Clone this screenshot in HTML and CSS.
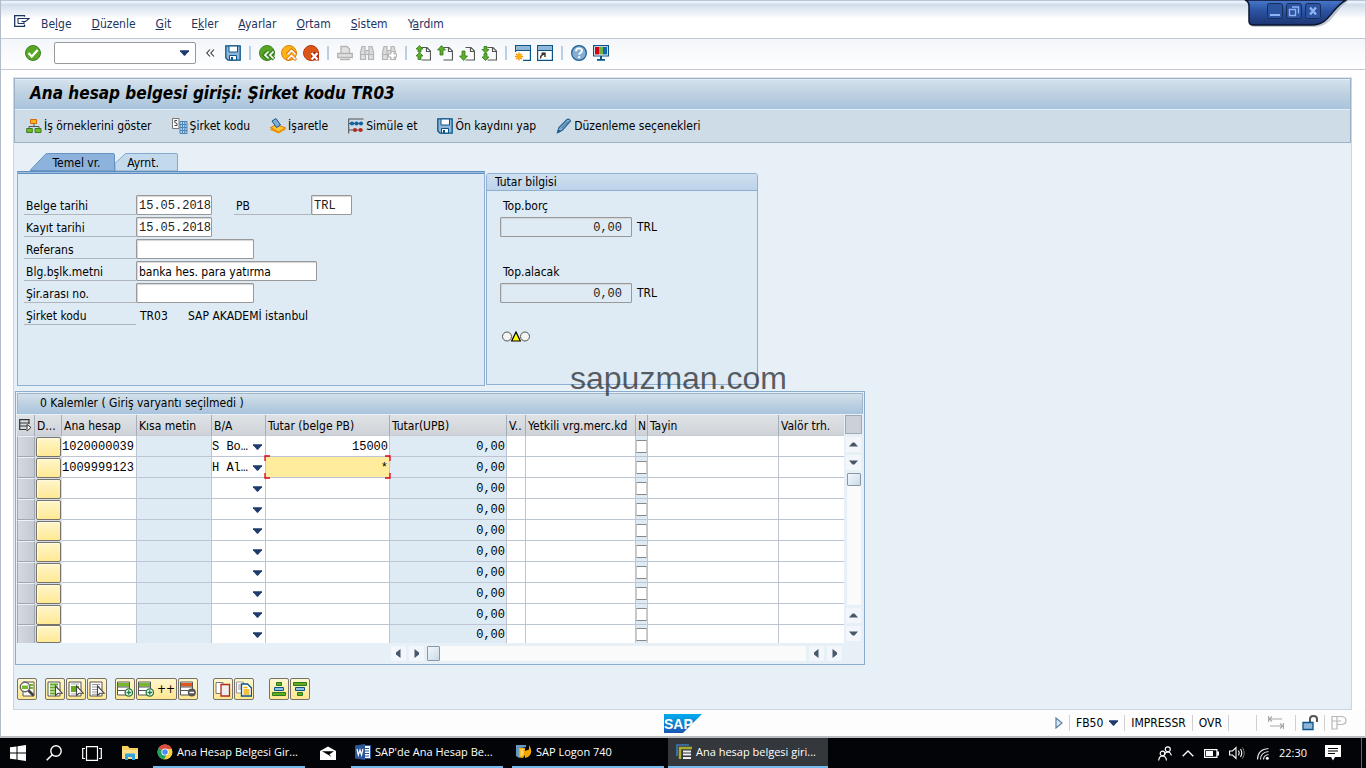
FILE: index.html
```html
<!DOCTYPE html>
<html lang="tr">
<head>
    <meta charset="UTF-8">
    <meta name="viewport" content="width=device-width, initial-scale=1.0">
    <title>Ana hesap belgesi girişi: Şirket kodu TR03</title>
    <link rel="stylesheet" href="styles.css">
</head>
<body>
<!-- shared icons -->
<svg class="sprite" aria-hidden="true">
    <symbol id="arrow-down" viewBox="0 0 10 6"><path d="M0 0h10v1L5.500 6h-1L0 1z" fill="#1f3a6e"/></symbol>
    <symbol id="save" viewBox="0 0 16 16">
        <path d="M.8.800h14.400v14.400H3L.800 13z" fill="#8fb6d9" stroke="#0a5488" stroke-width="1.300"/>
        <path d="M4 1h8.500v6H4z" fill="#fff" stroke="#0a5488"/>
        <path d="M4.500 10.500h7v4.500h-7z" fill="#fff" stroke="#0a5488"/><path d="M6 12h2v3H6z" fill="#0a5488"/>
    </symbol>
    <symbol id="page" viewBox="0 0 16 16"><path d="M6.500 2.500h5.500l3.500 3.500v9H6.500M11.500 2.500V6.500h4" fill="none" stroke="#555" stroke-width="1.200"/></symbol>
    <symbol id="page-up" viewBox="0 0 16 16"><path d="M4.500.600l4 4.400H6v5H3V5H.500z" fill="#5fae2c" stroke="#2d7a1c" stroke-width=".8"/></symbol>
    <symbol id="page-down" viewBox="0 0 16 16"><path d="M4.500 15.400l4-4.400H6V6H3v5H.500z" fill="#5fae2c" stroke="#2d7a1c" stroke-width=".8"/></symbol>
    <symbol id="binoculars" viewBox="0 0 16 16"><path d="M3 1.500h3v4h4v-4h3l1.500 6v7h-5v-5h-3v5h-5v-7zM6 5.500v4M10 5.500v4M1.500 9.500h5M9.500 9.500h5" fill="#ddd" stroke="#b4b4b4" stroke-width="1.200"/></symbol>
    <symbol id="list" viewBox="0 0 16 16"><path d="M1 1h12v14H1z" fill="#fff" stroke="#555"/></symbol>
    <symbol id="cursor" viewBox="0 0 16 16"><path d="M8.500 5v9.500l2.500-2.300h4.300z" fill="#fff" stroke="#444" stroke-width="1.100"/></symbol>
    <symbol id="row-add" viewBox="0 0 16 16">
        <path d="M.5 1h12v13H.500z" fill="#fff" stroke="#555"/><path d="M1 2h11v3.500H1z" fill="#76b82a"/><path d="M.5 6h12M.500 9.500h12" stroke="#555"/>
        <circle cx="11.800" cy="11.500" r="3.700" fill="#fff" stroke="#1f7a3a" stroke-width="1.300"/><path d="M9.500 11.500h4.600M11.800 9.200v4.600" stroke="#1f7a3a" stroke-width="1.300"/>
    </symbol>
    <symbol id="tri-up" viewBox="0 0 15 15"><path d="M3 9.500h9L8.500 5.500h-2z" fill="#46596b"/></symbol>
    <symbol id="tri-down" viewBox="0 0 15 15"><path d="M3 5.500h9L8.500 9.500h-2z" fill="#46596b"/></symbol>
    <symbol id="tri-left" viewBox="0 0 15 15"><path d="M9.500 3v9L5 8.500v-2z" fill="#46596b"/></symbol>
    <symbol id="tri-right" viewBox="0 0 15 15"><path d="M5.500 3v9L10 8.500v-2z" fill="#46596b"/></symbol>
</svg>

<div class="window">
    <nav class="menubar">
        <svg class="menu-icon" width="16" height="12" viewBox="0 0 16 12"><path d="M10.500 1.800V.700H.700v10.600h9.800V9.500" fill="none" stroke="#1d3461" stroke-width="1.300"/><path d="M4 8.500V3.500h11.200L11.500 6.500H7.500M7.500 8.500H4M8 6.500h2v2H7" fill="none" stroke="#1d3461" stroke-width="1.100"/></svg>
        <a href="#">Be<u>l</u>ge</a>
        <a href="#"><u>D</u>üzenle</a>
        <a href="#"><u>G</u>it</a>
        <a href="#">E<u>k</u>ler</a>
        <a href="#"><u>A</u>yarlar</a>
        <a href="#"><u>O</u>rtam</a>
        <a href="#"><u>S</u>istem</a>
        <a href="#">Y<u>a</u>rdım</a>
    </nav>

    <div class="window-controls">
        <svg width="110" height="30" viewBox="0 0 110 30">
            <defs><linearGradient id="wc" x1="0" y1="0" x2="0" y2="1"><stop offset="0" stop-color="#4a78c8"/><stop offset=".4" stop-color="#2d55a5"/><stop offset="1" stop-color="#1b3570"/></linearGradient></defs>
            <path d="M4 1c4 2 4 3 4 6v17q0 3 4 3h59c18 0 20-16 34-26z" fill="#8b94a5" opacity=".5"/>
            <path d="M2 0c3 1 4 3 4 6v15q0 4 4 4h59c18 0 18-16 34-25z" fill="url(#wc)" stroke="#0b1530" stroke-width="1.500"/>
            <g fill="#2c539f" stroke="#162d5e"><rect x="24.500" y="3.500" width="15" height="15" rx="2"/><rect x="43.500" y="3.500" width="15" height="15" rx="2"/><rect x="62.500" y="3.500" width="15" height="15" rx="2"/></g>
            <path d="M27 15h10" stroke="#8fb4f5" stroke-width="2"/>
            <path d="M46.500 9.500h6v6h-6zM49 7h6.500v6.500" fill="none" stroke="#8fb4f5" stroke-width="1.400"/>
            <path d="M67 7.500l6 7M73 7.500l-6 7" stroke="#8fb4f5" stroke-width="2.400"/>
        </svg>
    </div>

    <div class="toolbar">
        <button class="icon-btn" aria-label="Devam"><svg viewBox="0 0 16 16"><circle cx="8" cy="8" r="7.500" fill="#58a623" stroke="#3c8423"/><path d="M3.500 8l3.200 3.500 6-6.500" fill="none" stroke="#fff" stroke-width="2.200"/></svg></button>
        <div class="command">
            <input type="text" aria-label="Komut">
            <svg width="9" height="6"><use href="#arrow-down"/></svg>
        </div>
        <button class="chevrons" aria-label="Gizle"><svg width="9" height="8" viewBox="0 0 9 8"><path d="M4 .500L.800 4 4 7.500M8 .500L4.800 4 8 7.500" fill="none" stroke="#333" stroke-width="1.100"/></svg></button>
        <button class="icon-btn" aria-label="Kaydet"><svg><use href="#save"/></svg></button>
        <span class="sep"></span>
        <button class="icon-btn" aria-label="Geri"><svg viewBox="0 0 16 16"><circle cx="8" cy="8" r="7.500" fill="#58a623" stroke="#3c8423"/><path d="M9.500 6L5.500 10l4 4M15 6l-4 4 4 4" fill="none" stroke="#3c8423" stroke-width="4"/><path d="M9.500 6.500L6 10l3.500 3.500M14.500 6.500L11 10l3.500 3.500" fill="none" stroke="#fff" stroke-width="1.700"/></svg></button>
        <button class="icon-btn" aria-label="Son"><svg viewBox="0 0 16 16"><circle cx="8" cy="8" r="7.500" fill="#fbb216" stroke="#d8860b"/><path d="M6 9.500l4.500-4.500L15 9.500M6 15l4.500-4.500L15 15" fill="none" stroke="#d9690b" stroke-width="3"/><path d="M6.500 9.500l4-4 4 4M6.500 14.500l4-4 4 4" fill="none" stroke="#fff" stroke-width="1.700"/></svg></button>
        <button class="icon-btn" aria-label="İptal"><svg viewBox="0 0 16 16"><circle cx="8" cy="8" r="7.500" fill="#dc5617" stroke="#b53c12"/><path d="M8 7h8v8.500H8z" fill="#b92c10"/><path d="M8.500 8l6 6.500M14.500 8l-6 6.500" stroke="#fff" stroke-width="2.200"/></svg></button>
        <span class="sep"></span>
        <button class="icon-btn" aria-label="Yazdır" disabled><svg viewBox="0 0 16 16"><path d="M4 8V1.500h6L12.500 4v4M.700 8.500h14.600v4H.700zM3 14.500h10" fill="#e2e2e2" stroke="#b4b4b4" stroke-width="1.300"/></svg></button>
        <button class="icon-btn" aria-label="Bul" disabled><svg><use href="#binoculars"/></svg></button>
        <button class="icon-btn" aria-label="Sonrakini bul" disabled><svg viewBox="0 0 16 16"><use href="#binoculars"/><path d="M10 6.500h3v2.500h2.500v3H13v2.500h-3V12H7.500V9H10z" fill="#fff" stroke="#b4b4b4"/></svg></button>
        <span class="sep"></span>
        <button class="icon-btn" aria-label="İlk sayfa"><svg viewBox="0 0 16 16"><use href="#page"/><path d="M4.500.500L8 4H6v3H3V4H1zM4.500 7.500L8 11H6v3.500H3V11H1z" fill="#5fae2c" stroke="#2d7a1c" stroke-width=".8"/></svg></button>
        <button class="icon-btn" aria-label="Önceki sayfa"><svg viewBox="0 0 16 16"><use href="#page"/><use href="#page-up"/></svg></button>
        <button class="icon-btn" aria-label="Sonraki sayfa"><svg viewBox="0 0 16 16"><use href="#page"/><use href="#page-down"/></svg></button>
        <button class="icon-btn" aria-label="Son sayfa"><svg viewBox="0 0 16 16"><use href="#page"/><path d="M4.500 8L8 4.500H6V1.500H3v3H1zM4.500 15.500L8 12H6V8.500H3V12H1z" fill="#5fae2c" stroke="#2d7a1c" stroke-width=".8"/></svg></button>
        <span class="sep"></span>
        <button class="icon-btn" aria-label="Yeni oturum"><svg viewBox="0 0 16 16"><path d="M.6.600h14.800v14.800H.600z" fill="#fff" stroke="#0a5488" stroke-width="1.200"/><path d="M1.200 1.200h13.600v4H1.200z" fill="#8fb6d9"/><path d="M1 5.500h14" stroke="#0a5488"/><path d="M0 7h8v9H0z" fill="#fff"/><path d="M4 7.500v8M0 11.500h8M1.200 8.700l5.600 5.600M6.800 8.700l-5.600 5.600" stroke="#f39200" stroke-width="1.300"/><circle cx="4" cy="11.500" r="2.300" fill="#ffb000"/></svg></button>
        <button class="icon-btn" aria-label="Kısayol"><svg viewBox="0 0 16 16"><path d="M.6.600h14.800v14.800H.600z" fill="#fff" stroke="#0a5488" stroke-width="1.200"/><path d="M1.200 1.200h13.600v4H1.200z" fill="#8fb6d9"/><path d="M1 5.500h14" stroke="#0a5488"/><path d="M3.500 13.500c0-2.500 1-4 4-4.500M4.500 8.200H8V12" fill="none" stroke="#333" stroke-width="1.400"/></svg></button>
        <span class="sep"></span>
        <button class="icon-btn" aria-label="Yardım"><svg viewBox="0 0 16 16"><circle cx="8" cy="8" r="7.400" fill="#84add3" stroke="#1f5f92" stroke-width="1.200"/><path d="M5 6.200c0-3.800 6-3.600 6-.4 0 2-2.800 2-2.800 4" fill="none" stroke="#fff" stroke-width="1.900"/><path d="M7.200 11.200h2v2h-2z" fill="#fff"/></svg></button>
        <button class="icon-btn" aria-label="Yerel düzen"><svg viewBox="0 0 16 16"><path d="M.6.600h14.800v10.400H.600z" fill="#fff" stroke="#0a5488" stroke-width="1.200"/><path d="M2 2h4v7.500H2z" fill="#d4001a"/><path d="M6 2h4v7.500H6z" fill="#6cb33f"/><path d="M10 2h4v7.500h-4z" fill="#1568b0"/><path d="M7 11h2v3H7zM4 14h8v1.800H4z" fill="#0a5488"/></svg></button>
    </div>

    <main class="screen">
        <div class="screen-head">
            <h1>Ana hesap belgesi girişi: Şirket kodu TR03</h1>
            <div class="app-toolbar">
                <button><svg viewBox="0 0 16 16"><path d="M8 6v3M3 11V8.500h10V11" fill="none" stroke="#555"/><path d="M4.500 1.500h6v4h-6z" fill="#fdb813" stroke="#d8690b"/><path d="M.7 10.500h5.600v4H.700zM9 10.500h6v4H9z" fill="#76b82a" stroke="#3b7d23"/></svg>İş örneklerini göster</button>
                <button><svg viewBox="0 0 16 16"><path d="M.5.500h6.500v10H.500z" fill="#fff" stroke="#777"/><path d="M5 2.500H2.800v2l2.200 1v2H2.500" fill="none" stroke="#444"/><path d="M8 3.500h7v12H8z" fill="#b7d1ea" stroke="#4b83b5"/><path d="M8 6.500h7M8 9.500h7M8 12.500h7M10.500 4v11M12.800 4v11" stroke="#4b83b5"/></svg>Şirket kodu</button>
                <button><svg viewBox="0 0 16 16"><path d="M.5 9.500l6-3 9 3.500-7 4z" fill="#fdc52f" stroke="#d8790b"/><path d="M.5 10v2l8 3.500 7-4V10l-7 4z" fill="#f39200"/><path d="M2 3l4-2.500 4.500 6.500-4 2.500z" fill="#7eaedb" stroke="#23557f"/></svg>İşaretle</button>
                <button><svg viewBox="0 0 16 16"><path d="M.7 15.500V1h14.800M.700 5.500H15M.700 12H15" fill="none" stroke="#555" stroke-width="1.100"/><g fill="#0f64a0"><circle cx="4" cy="5.500" r="2.100"/><circle cx="8.500" cy="5.500" r="2.100"/><circle cx="13" cy="5.500" r="2.100"/></g><g fill="#b52a1c"><circle cx="7" cy="12" r="2.100"/><circle cx="12.500" cy="12" r="2.100"/></g></svg>Simüle et</button>
                <button><svg><use href="#save"/></svg>Ön kaydını yap</button>
                <button><svg viewBox="0 0 16 16"><path d="M1.500 14.500l1.500-5L11 1.500q2-1 3.500 1.500L6.500 12z" fill="#8fb6d9" stroke="#23608f" stroke-width="1.200"/><path d="M1.500 14.500l1-3 2 2zM5 10.500l7-7" fill="#23608f" stroke="#23608f"/></svg>Düzenleme seçenekleri</button>
            </div>
        </div>

        <div class="content">
            <div class="panels">
                <section class="tab-box">
                    <div class="tabs">
                        <button class="tab tab-active"><svg viewBox="0 0 86 19" preserveAspectRatio="none"><path d="M0 18.500L15 2q1-1.500 3-1.500h66q1.500 0 1.500 1.500v17z" fill="#8db2dc" stroke="#5f8fbf"/></svg><span>Temel vr.</span></button>
                        <button class="tab"><svg viewBox="0 0 63 19" preserveAspectRatio="none"><path d="M0 19v-8L9 2q1-1.500 3-1.500h49q1.500 0 1.500 1.500v17z" fill="#c3d9ec" stroke="#7fa6cc"/></svg><span>Ayrnt.</span></button>
                    </div>
                    <div class="tab-page">
                        <div class="row">
                            <label for="f-date">Belge tarihi</label><input id="f-date" class="mono w-date" type="text" value="15.05.2018">
                            <label for="f-cur" class="label-short">PB</label><input id="f-cur" class="mono w-cur" type="text" value="TRL">
                        </div>
                        <div class="row"><label for="f-post">Kayıt tarihi</label><input id="f-post" class="mono w-date" type="text" value="15.05.2018"></div>
                        <div class="row"><label for="f-ref">Referans</label><input id="f-ref" class="w-ref" type="text"></div>
                        <div class="row"><label for="f-text">Blg.bşlk.metni</label><input id="f-text" class="w-text" type="text" value="banka hes. para yatırma"></div>
                        <div class="row"><label for="f-ic">Şir.arası no.</label><input id="f-ic" class="w-ref" type="text"></div>
                        <div class="row"><span class="label">Şirket kodu</span><span class="company-code">TR03</span><span>SAP AKADEMİ istanbul</span></div>
                    </div>
                </section>

                <section class="amount-box">
                    <h2>Tutar bilgisi</h2>
                    <div class="amount-body">
                        <label for="a-debit">Top.borç</label>
                        <div class="amount"><input id="a-debit" class="mono" type="text" value="0,00" readonly>TRL</div>
                        <label for="a-credit">Top.alacak</label>
                        <div class="amount"><input id="a-credit" class="mono" type="text" value="0,00" readonly>TRL</div>
                        <svg class="lights" width="28" height="11" viewBox="0 0 28 11"><circle cx="5" cy="5.500" r="4.500" fill="#f4f4f0" stroke="#555"/><circle cx="23" cy="5.500" r="4.500" fill="#f4f4f0" stroke="#555"/><path d="M14 1l4.300 9H9.700z" fill="#ff0" stroke="#000" stroke-width="1.200"/></svg>
                    </div>
                </section>
                <div class="watermark">sapuzman.com</div>
            </div>

            <section class="items">
                <h2>0 Kalemler ( Giriş varyantı seçilmedi )</h2>
                <div class="grid">
                    <table>
                        <colgroup><col class="c-sel"><col class="c-st"><col class="c-acc"><col class="c-acc"><col class="c-dc"><col class="c-amt"><col class="c-loc"><col class="c-v"><col class="c-jur"><col class="c-n"><col class="c-asg"><col class="c-val"></colgroup>
                        <thead>
                            <tr><th><svg width="13" height="13" viewBox="0 0 13 13"><path d="M10 5V.700H.700v9.800H7M.700 4H10M.700 7H8" fill="none" stroke="#333" stroke-width="1.200"/><path d="M8 5.500v6.500l4-3.500z" fill="#fff" stroke="#333"/></svg></th><th>D...</th><th>Ana hesap</th><th>Kısa metin</th><th>B/A</th><th>Tutar (belge PB)</th><th>Tutar(UPB)</th><th>V..</th><th>Yetkili vrg.merc.kd</th><th>N</th><th>Tayin</th><th>Valör trh.</th></tr>
                        </thead>
                        <tbody>
                            <tr><td></td><td><button aria-label="Durum"></button></td><td><input type="text" aria-label="Ana hesap" value="1020000039"></td><td></td><td><div class="dc"><select aria-label="B/A"><option>S Bo…</option></select><svg><use href="#arrow-down"/></svg></div></td><td><input type="text" class="num" aria-label="Tutar" value="15000"></td><td>0,00</td><td></td><td></td><td><input type="checkbox" aria-label="N"></td><td></td><td></td></tr>
                            <tr><td></td><td><button aria-label="Durum"></button></td><td><input type="text" aria-label="Ana hesap" value="1009999123"></td><td></td><td><div class="dc"><select aria-label="B/A"><option>H Al…</option></select><svg><use href="#arrow-down"/></svg></div></td><td class="current"><input type="text" class="num" aria-label="Tutar" value="*"><svg class="focus" viewBox="0 0 127 24"><path d="M1 6V1h5M121 1h5v5M126 18v5h-5M6 23H1v-5" fill="none" stroke="#e2000f" stroke-width="1.300"/></svg></td><td>0,00</td><td></td><td></td><td><input type="checkbox" aria-label="N"></td><td></td><td></td></tr>
                            <tr><td></td><td><button aria-label="Durum"></button></td><td><input type="text" aria-label="Ana hesap"></td><td></td><td><div class="dc"><select aria-label="B/A"><option></option></select><svg><use href="#arrow-down"/></svg></div></td><td><input type="text" class="num" aria-label="Tutar"></td><td>0,00</td><td></td><td></td><td><input type="checkbox" aria-label="N"></td><td></td><td></td></tr>
                            <tr><td></td><td><button aria-label="Durum"></button></td><td><input type="text" aria-label="Ana hesap"></td><td></td><td><div class="dc"><select aria-label="B/A"><option></option></select><svg><use href="#arrow-down"/></svg></div></td><td><input type="text" class="num" aria-label="Tutar"></td><td>0,00</td><td></td><td></td><td><input type="checkbox" aria-label="N"></td><td></td><td></td></tr>
                            <tr><td></td><td><button aria-label="Durum"></button></td><td><input type="text" aria-label="Ana hesap"></td><td></td><td><div class="dc"><select aria-label="B/A"><option></option></select><svg><use href="#arrow-down"/></svg></div></td><td><input type="text" class="num" aria-label="Tutar"></td><td>0,00</td><td></td><td></td><td><input type="checkbox" aria-label="N"></td><td></td><td></td></tr>
                            <tr><td></td><td><button aria-label="Durum"></button></td><td><input type="text" aria-label="Ana hesap"></td><td></td><td><div class="dc"><select aria-label="B/A"><option></option></select><svg><use href="#arrow-down"/></svg></div></td><td><input type="text" class="num" aria-label="Tutar"></td><td>0,00</td><td></td><td></td><td><input type="checkbox" aria-label="N"></td><td></td><td></td></tr>
                            <tr><td></td><td><button aria-label="Durum"></button></td><td><input type="text" aria-label="Ana hesap"></td><td></td><td><div class="dc"><select aria-label="B/A"><option></option></select><svg><use href="#arrow-down"/></svg></div></td><td><input type="text" class="num" aria-label="Tutar"></td><td>0,00</td><td></td><td></td><td><input type="checkbox" aria-label="N"></td><td></td><td></td></tr>
                            <tr><td></td><td><button aria-label="Durum"></button></td><td><input type="text" aria-label="Ana hesap"></td><td></td><td><div class="dc"><select aria-label="B/A"><option></option></select><svg><use href="#arrow-down"/></svg></div></td><td><input type="text" class="num" aria-label="Tutar"></td><td>0,00</td><td></td><td></td><td><input type="checkbox" aria-label="N"></td><td></td><td></td></tr>
                            <tr><td></td><td><button aria-label="Durum"></button></td><td><input type="text" aria-label="Ana hesap"></td><td></td><td><div class="dc"><select aria-label="B/A"><option></option></select><svg><use href="#arrow-down"/></svg></div></td><td><input type="text" class="num" aria-label="Tutar"></td><td>0,00</td><td></td><td></td><td><input type="checkbox" aria-label="N"></td><td></td><td></td></tr>
                            <tr><td></td><td><button aria-label="Durum"></button></td><td><input type="text" aria-label="Ana hesap"></td><td></td><td><div class="dc"><select aria-label="B/A"><option></option></select><svg><use href="#arrow-down"/></svg></div></td><td><input type="text" class="num" aria-label="Tutar"></td><td>0,00</td><td></td><td></td><td><input type="checkbox" aria-label="N"></td><td></td><td></td></tr>
                        </tbody>
                    </table>
                    <div class="vscroll">
                        <button class="corner" aria-label="Tablo ayarları"></button>
                        <button class="step" aria-label="Yukarı"><svg><use href="#tri-up"/></svg></button>
                        <button class="step" aria-label="Aşağı"><svg><use href="#tri-down"/></svg></button>
                        <div class="track"><div class="thumb"></div></div>
                        <button class="step" aria-label="Yukarı"><svg><use href="#tri-up"/></svg></button>
                        <button class="step" aria-label="Aşağı"><svg><use href="#tri-down"/></svg></button>
                    </div>
                </div>
                <div class="hscroll">
                    <button class="step" aria-label="Sola"><svg><use href="#tri-left"/></svg></button>
                    <button class="step" aria-label="Sağa"><svg><use href="#tri-right"/></svg></button>
                    <div class="track"><div class="thumb"></div></div>
                    <button class="step" aria-label="Sola"><svg><use href="#tri-left"/></svg></button>
                    <button class="step" aria-label="Sağa"><svg><use href="#tri-right"/></svg></button>
                </div>
            </section>

            <div class="actions">
                <div class="group">
                    <button aria-label="Ayrıntı"><svg viewBox="0 0 16 16"><path d="M4 1h11v14H4z" fill="#fff" stroke="#555"/><path d="M11 3h3v2h-3zM11 6h3v2h-3z" fill="#76b82a"/><circle cx="6" cy="6" r="4.700" fill="#fff" stroke="#666" stroke-width="1.500"/><path d="M3 4.500h6v3.500H3z" fill="#76b82a"/><path d="M9.500 9.500l5 5" stroke="#444" stroke-width="2.800"/></svg></button>
                </div>
                <div class="group">
                    <button aria-label="Tümünü seç"><svg viewBox="0 0 16 16"><use href="#list"/><path d="M3 3.500h8M3 6.500h8M3 9.500h8M3 12.500h8" stroke="#62ab20" stroke-width="2.200"/><use href="#cursor"/></svg></button>
                    <button aria-label="Blok seç"><svg viewBox="0 0 16 16"><use href="#list"/><path d="M3 3h8M3 13h8" stroke="#aaa"/><path d="M3 5h8v6H3z" fill="#62ab20"/><use href="#cursor"/></svg></button>
                    <button aria-label="Seçimi kaldır"><svg viewBox="0 0 16 16"><use href="#list"/><path d="M3 3.500h8M3 6h8M3 8.500h8M3 11h8M3 13.300h8" stroke="#999"/><use href="#cursor"/></svg></button>
                </div>
                <div class="group">
                    <button aria-label="Satır ekle"><svg><use href="#row-add"/></svg></button>
                    <button class="wide"><svg><use href="#row-add"/></svg>++</button>
                    <button aria-label="Satır sil"><svg viewBox="0 0 16 16"><path d="M.5 1h12v13H.500z" fill="#fff" stroke="#555"/><path d="M1 2h11v3.500H1z" fill="#e0561b"/><path d="M.5 6h12M.500 9.500h12" stroke="#555"/><circle cx="11.800" cy="11.500" r="4" fill="#555"/><path d="M9.500 11.500h4.600" stroke="#fff" stroke-width="1.500"/></svg></button>
                </div>
                <div class="group group-gap">
                    <button aria-label="Sil"><svg viewBox="0 0 16 16"><path d="M1 1.500h7v11H1z" fill="#fff" stroke="#777"/><path d="M6 3.500h8.500v11.500H6z" fill="#eee" stroke="#b52a1c" stroke-width="1.300"/></svg></button>
                    <button aria-label="Kopyala"><svg viewBox="0 0 16 16"><path d="M.5 1h7v11h-7z" fill="#fff" stroke="#999"/><path d="M2 4h4M2 6h4M2 8h4" stroke="#999"/><path d="M5.500 3h6l4 4v8h-10z" fill="#fff" stroke="#0a5488" stroke-width="1.300"/><path d="M7.500 6.500h4M7.500 9h6M7.500 11h6M7.500 13h6" stroke="#f0ac00" stroke-width="1.300"/></svg></button>
                </div>
                <div class="group group-gap">
                    <button aria-label="Artan sırala"><svg viewBox="0 0 16 16"><path d="M5.500 1.500h5v3h-5z" fill="#62ab20" stroke="#2d7a1c"/><path d="M3.500 6.500h9v3h-9z" fill="#8fc1ea" stroke="#0a5488"/><path d="M1.500 11.500h13v3h-13z" fill="#62ab20" stroke="#2d7a1c"/></svg></button>
                    <button aria-label="Azalan sırala"><svg viewBox="0 0 16 16"><path d="M1.500 1.500h13v3h-13z" fill="#62ab20" stroke="#2d7a1c"/><path d="M3.500 6.500h9v3h-9z" fill="#8fc1ea" stroke="#0a5488"/><path d="M5.500 11.500h5v3h-5z" fill="#62ab20" stroke="#2d7a1c"/></svg></button>
                </div>
            </div>
        </div>
    </main>

    <footer class="statusbar">
        <div></div>
        <svg width="38" height="19" viewBox="0 0 38 19">
            <defs><linearGradient id="sap" x1="0" y1="0" x2="0" y2="1"><stop offset="0" stop-color="#00aeef"/><stop offset="1" stop-color="#1b55b5"/></linearGradient></defs>
            <path d="M0 0h38L19 19H0z" fill="url(#sap)"/><text x="0" y="15" class="sap-text">SAP</text>
        </svg>
        <div class="status-info">
            <svg width="8" height="12" viewBox="0 0 8 12"><path d="M1 1v10l6-5z" fill="#dbe8f3" stroke="#5d7ea3" stroke-width="1.200"/></svg>
            <span class="st">FB50 <svg width="9" height="6"><use href="#arrow-down"/></svg></span>
            <span class="st">IMPRESSR</span>
            <span class="st">OVR</span>
            <span class="st st-empty"></span>
            <span class="st st-icon st-wide"><svg viewBox="0 0 16 16"><path d="M.6 1v6M1 4h13M4 1.500L1.500 4 4 6.500M15.400 8v6M15 11H2M12 8.500l2.500 2.500-2.500 2.500" fill="none" stroke="#a8a8a8" stroke-width="1.200"/></svg></span>
            <span class="st st-icon"><svg viewBox="0 0 16 16"><path d="M8 7V4q0-3 3.500-3T15 4v3" fill="none" stroke="#555" stroke-width="2"/><path d="M1 7.500h10v7H1z" fill="#8fb6d9" stroke="#0a5488" stroke-width="1.300"/></svg></span>
            <span class="st st-icon"><svg viewBox="0 0 16 16"><path d="M1 1.500h9q5 0 5 4t-5 4H6v4.500H1zM1 6h5V2M6 9.500V6h4" fill="none" stroke="#b8b8b8" stroke-width="1.200"/></svg></span>
        </div>
    </footer>
</div>

<div class="taskbar">
    <div class="task-icons">
        <svg width="16" height="16" viewBox="0 0 16 16"><path d="M0 2.300L6.500 1.400v6.100H0zM7.500 1.200L16 0v7.500H7.500zM0 8.500h6.500v6.100L0 13.700zM7.500 8.500H16V16l-8.500-1.200z" fill="#fff"/></svg>
        <svg width="16" height="16" viewBox="0 0 16 16"><circle cx="10" cy="6" r="5.200" fill="none" stroke="#fff" stroke-width="1.400"/><path d="M6.500 9.500L.700 15.300" stroke="#fff" stroke-width="1.600"/></svg>
        <svg width="20" height="15" viewBox="0 0 20 15"><path d="M4.500.700h11v13.600h-11zM3 2.500H.700v10H3M17 2.500h2.300v10H17" fill="none" stroke="#fff" stroke-width="1.200"/></svg>
        <svg width="16" height="16" viewBox="0 0 16 16"><path d="M0 1h6l1.500 2H16v11H0z" fill="#f5cf60"/><path d="M0 5h16v9H0z" fill="#ffe08a"/><path d="M3 15V8.500h10V15h-3v-3H6v3z" fill="#35a3e0"/></svg>
    </div>
    <button class="task"><svg viewBox="0 0 16 16"><circle cx="8" cy="8" r="7.500" fill="#ffcd40"/><path d="M8 8L1.500 4.200A7.500 7.500 0 0 1 14.800 5H8z" fill="#dd4b3e"/><path d="M8 8L1.500 4.200A7.500 7.500 0 0 0 7 15.400L10.500 9z" fill="#1da262"/><circle cx="8" cy="8" r="3.600" fill="#fff"/><circle cx="8" cy="8" r="2.800" fill="#4c8bf5"/></svg>Ana Hesap Belgesi Gir...</button>
    <svg class="mail" width="16" height="14" viewBox="0 0 16 14"><path d="M0 5l8-4.500L16 5v9H0z" fill="#fff"/><path d="M2 5.300h12L8.500 9z" fill="#000"/><path d="M8.500 7l3 4-3-2z" fill="#000"/></svg>
    <button class="task"><svg viewBox="0 0 16 16"><path d="M9 1.500h6.500v13H9z" fill="#fff" stroke="#2b579a"/><path d="M10 4.500h4M10 7h4M10 9.500h4M10 12h4" stroke="#2b579a"/><path d="M0 1.500L10 0v16L0 14.500z" fill="#2b579a"/><path d="M2 5l1.300 6L5 6l1.500 5L8 5" fill="none" stroke="#fff" stroke-width="1.200"/></svg>SAP'de Ana Hesap Be...</button>
    <button class="task"><svg viewBox="0 0 16 16"><path d="M0 1h10v2L3 4.500V14L0 12z" fill="#6a96bd"/><path d="M3 4h6v3l4-1.500V1q4 6 1 10-2 3-5 3v-3l-2 3-4-.5z" fill="#f7a800"/><path d="M4.500 5h3v6l-3 2z" fill="#ffd75a"/></svg>SAP Logon 740</button>
    <button class="task task-active"><svg viewBox="0 0 16 16"><path d="M1 12V1h12" fill="none" stroke="#3c7bb8" stroke-width="1.700"/><path d="M4 15V4h12" fill="none" stroke="#a9ab2c" stroke-width="2.500"/><path d="M7 7.500h8M7 10.500h8M7 14h8" stroke="#eee" stroke-width="2.200"/></svg>Ana hesap belgesi giri...</button>
    <div class="tray">
        <svg width="14" height="15" viewBox="0 0 14 15"><g fill="none" stroke="#fff" stroke-width="1.200"><circle cx="9.800" cy="3.300" r="2.500"/><path d="M6.500 9q.500-3 3.300-3t3.500 3.500"/><circle cx="4.500" cy="7.500" r="2.300"/><path d="M.7 14.500q.300-4.500 3.800-4.500t4 4.500"/></g></svg>
        <svg width="12" height="7" viewBox="0 0 12 7"><path d="M.7 6.300L6 1l5.300 5.300" fill="none" stroke="#fff" stroke-width="1.300"/></svg>
        <svg width="15" height="9" viewBox="0 0 15 9"><path d="M.6.600h12.300v7.800H.600z" fill="none" stroke="#fff" stroke-width="1.200"/><path d="M2 2h7v5H2zM13 2.500h2v4h-2z" fill="#fff"/></svg>
        <svg width="17" height="14" viewBox="0 0 17 14"><path d="M.6 5h2.900L7 1.500v11L3.500 9H.600zM9.500 4.500q1.500 2.500 0 5M11.500 3q2.500 4 0 8" fill="none" stroke="#fff" stroke-width="1.100"/><path d="M13.500 1.500q3.500 5.500 0 11" fill="none" stroke="#777"/></svg>
        <svg width="13" height="13" viewBox="0 0 13 13"><path d="M1.500 12.500q0-10 11-11M4.500 12.500q0-7 8-8M7.500 12.500q0-4 5-5" fill="none" stroke="#ddd" stroke-width="1.200"/><circle cx="11.300" cy="11.300" r="1.500" fill="#fff"/></svg>
        <span>22:30</span>
        <svg class="notice" width="16" height="16" viewBox="0 0 16 16"><path d="M0 0h16v12H10l-2 3.500L6 12H0z" fill="#fff"/><path d="M3 3.500h10M3 6h10M3 8.500h7" stroke="#000"/></svg>
    </div>
</div>
</body>
</html>
```

FILE: styles.css
```css
* {
    box-sizing: border-box;
}
body {
    margin: 0;
    min-height: 100vh;
    display: flex;
    flex-direction: column;
    font-family: "DejaVu Sans Condensed", Tahoma, sans-serif;
    font-size: 12px;
    line-height: 16px;
    color: #000;
    background: #fff;
}
button, input, select {
    font: inherit;
    color: inherit;
    margin: 0;
    padding: 0;
    border: none;
    border-radius: 0;
    background: none;
    outline: none;
    appearance: none;
}
svg {
    display: block;
    flex: none;
}
h1, h2 {
    margin: 0;
}
.sprite {
    position: absolute;
    width: 0;
    height: 0;
}
.window {
    flex: 1;
    display: flex;
    flex-direction: column;
    position: relative;
    border-left: 1px solid #b3bccb;
    border-right: 1px solid #c9cfd8;
    border-bottom: 2px solid #b9bcc1;
}

/* menu and system toolbar */
.menubar {
    display: flex;
    align-items: center;
    gap: 20px;
    height: 39px;
    padding: 8px 13px 0;
    border-top: 1px solid #b9c6da;
    border-bottom: 1px solid #c3cad6;
    background: linear-gradient(#e9f1fb 0, #e9f1fb 2px, #d0dcea 3px, #fff 18px);
}
.menubar a {
    color: #1d3461;
    text-decoration: none;
}
.menu-icon {
    margin: 0 -9px 6px 0;
}
.window-controls {
    position: absolute;
    top: 0;
    right: 12px;
}
.toolbar {
    display: flex;
    align-items: center;
    gap: 6px;
    height: 31px;
    padding: 0 24px 2px;
    border-bottom: 1px solid #c3cad6;
    background: linear-gradient(#f3f6fa, #fff);
}
.icon-btn, .icon-btn svg {
    width: 16px;
    height: 16px;
}
.sep {
    width: 2px;
    height: 14px;
    margin: 0 2px;
    background: #b9d0e6;
}
.command {
    display: flex;
    align-items: center;
    width: 142px;
    height: 22px;
    margin-left: 7px;
    padding-right: 6px;
    border: 1px solid #999;
    border-radius: 2px;
    background: #fff;
}
.command input {
    flex: 1;
    min-width: 0;
}
.chevrons {
    margin: 0 4px;
}

/* transaction screen */
.screen {
    flex: 1;
    display: flex;
    flex-direction: column;
    margin: 7px 13px 0 12px;
    border: 1px solid #ccd6e2;
    border-top: 1px solid #dfe6ee;
    background: #e8f0f7;
}
.screen-head {
    border: 1px solid #9db2c6;
    background: #cedce7;
}
.screen-head h1 {
    height: 31px;
    padding-left: 15px;
    border-top: 1px solid #e4eef6;
    border-bottom: 1px solid #e4eef6;
    font-size: 17px;
    line-height: 26px;
    font-style: italic;
    background: linear-gradient(#d3e1ec, #bdd0e0 50%, #a9c4de);
}
.app-toolbar {
    display: flex;
    align-items: center;
    gap: 20px;
    height: 32px;
    padding: 0 0 1px 11px;
}
.app-toolbar button {
    display: flex;
    align-items: center;
    gap: 2px;
}
.app-toolbar svg {
    width: 16px;
    height: 16px;
}
.content {
    flex: 1;
    padding: 10px 1px 0;
}
.panels {
    position: relative;
    display: flex;
    align-items: stretch;
    gap: 1px;
    padding-left: 2px;
}
.tabs {
    display: flex;
    height: 18px;
    padding-left: 13px;
}
.tab {
    position: relative;
    width: 63px;
    padding: 1px 7px 0 0;
}
.tab-active {
    width: 85px;
    padding: 1px 0 0 8px;
}
.tab svg {
    position: absolute;
    top: 0;
    left: 0;
    width: 100%;
    height: 100%;
}
.tab span {
    position: relative;
}
.tab-page {
    width: 468px;
    height: 215px;
    padding: 23px 6px 0;
    border: 1px solid #8fb0d2;
    border-top-color: #5f8fbf;
    background: #deebf5;
    box-shadow: inset 0 1px #9dbce0, inset 0 2px #5f8fbf;
}
.row {
    display: flex;
    height: 22px;
}
.row label, .label {
    width: 112px;
    height: 20px;
    padding-left: 2px;
    border-bottom: 1px solid #b0b6bc;
}
.row label, .row span {
    line-height: 22px;
}
.row .label-short {
    width: 77px;
    margin-left: 22px;
}
.row input, .amount input {
    height: 20px;
    padding: 1px 2px 0;
    border: 1px solid #999;
    border-radius: 1px;
    background: #fff;
    box-shadow: inset 1px 1px 1px #d5d5d5;
}
.row .w-date {
    width: 76px;
    padding: 1px 0 0 2px;
}
.row .w-cur {
    width: 41px;
}
.row .w-ref {
    width: 118px;
}
.row .w-text {
    width: 181px;
}
.company-code {
    width: 52px;
    padding-left: 4px;
}
.mono {
    font-family: "Liberation Mono", "Courier New", monospace;
    color: #222;
}
.amount-box {
    width: 272px;
    margin: 20px 0 1px;
    border: 1px solid #8fb0d2;
    border-radius: 3px 3px 0 0;
    background: #deebf4;
}
.amount-box h2 {
    height: 17px;
    padding-left: 8px;
    border-bottom: 1px solid #8fb0d2;
    border-radius: 2px 2px 0 0;
    font-size: 12px;
    font-weight: normal;
    background: linear-gradient(#cfe0ef, #bcd3e9);
}
.amount-body {
    display: flex;
    flex-direction: column;
    padding: 4px 13px;
}
.amount-body label {
    height: 22px;
    padding-left: 3px;
    line-height: 22px;
}
.amount {
    display: flex;
    align-items: center;
    gap: 5px;
    height: 20px;
    margin-bottom: 24px;
}
.amount input {
    width: 132px;
    padding-right: 9px;
    text-align: right;
    background: #deebf5;
}
.lights {
    margin: 4px 0 0 2px;
}
.watermark {
    position: absolute;
    left: 555px;
    bottom: -12px;
    font-family: "Liberation Sans", Arial, sans-serif;
    font-size: 32px;
    line-height: 40px;
    color: rgba(40, 44, 48, 0.75);
}

/* line items */
.items {
    width: 850px;
    height: 274px;
    margin-top: 5px;
    padding: 1px;
    border: 1px solid #8aaccd;
}
.items h2 {
    height: 21px;
    padding-left: 22px;
    border: 1px solid #9fb5ca;
    border-bottom: none;
    font-size: 12px;
    line-height: 18px;
    font-weight: normal;
    background: linear-gradient(#d3e1ec, #bdd0e0 50%, #a9c4de);
}
.grid {
    display: flex;
    gap: 1px;
}
table {
    width: 827px;
    margin-top: 1px;
    table-layout: fixed;
    border-collapse: separate;
    border-spacing: 0;
}
.c-sel { width: 18px; }
.c-st { width: 27px; }
.c-acc { width: 75px; }
.c-dc { width: 54px; }
.c-amt { width: 124px; }
.c-loc { width: 117px; }
.c-v { width: 19px; }
.c-jur { width: 110px; }
.c-n { width: 12px; }
.c-asg { width: 131px; }
.c-val { width: 65px; }
th {
    height: 21px;
    padding: 1px 0 0 2px;
    border-right: 1px solid #a4adb8;
    border-bottom: 1px solid #c3ccd6;
    font-weight: normal;
    text-align: left;
    white-space: nowrap;
    overflow: hidden;
    background: linear-gradient(#dfe2e5, #cfd3d8);
}
td {
    height: 21px;
    padding: 1px 0 0;
    border-right: 1px solid #bcc5d1;
    border-bottom: 1px solid #bcc5d1;
    background: #fff;
    font-family: "Liberation Mono", "Courier New", monospace;
}
tbody tr:last-child td {
    height: 18px;
    border-bottom: none;
}
th:last-child, td:last-child {
    border-right: none;
}
td:first-child {
    padding: 0;
    border: 1px solid #9fa8b3;
    border-top: 1px solid #eef1f4;
    background: linear-gradient(90deg, #d5d9df, #c5cad2);
}
td:nth-child(2) {
    border: none;
    padding: 0 1px;
    background: #d4dde6;
}
td:nth-child(2) button {
    display: block;
    width: 25px;
    height: 20px;
    border: 1px solid #77736a;
    border-radius: 2px;
    background: linear-gradient(#fff6c9, #ffe996);
    box-shadow: inset 1px 1px 0 #fffbe5;
}
tbody tr:last-child td:nth-child(2) button {
    height: 18px;
}
td:nth-child(4), td:nth-child(7), td:nth-child(10) {
    background: #deebf5;
}
td:nth-child(7) {
    padding-right: 1px;
    text-align: right;
}
td input[type="text"] {
    display: block;
    width: 100%;
    height: 17px;
}
td .num {
    padding-right: 1px;
    text-align: right;
}
td input[type="checkbox"] {
    display: block;
    width: 11px;
    height: 13px;
    border: 1px solid #ccc;
    border-top-color: #888;
    border-bottom-color: #888;
    background: #fff;
}
.dc {
    display: flex;
    align-items: center;
    gap: 4px;
}
.dc select {
    width: 37px;
    height: 17px;
}
.dc svg {
    width: 9px;
    height: 6px;
}
.current {
    position: relative;
    background: #ffec9c;
}
.focus {
    position: absolute;
    top: -2px;
    left: -2px;
    width: 127px;
    height: 24px;
}
.step, .step svg {
    width: 15px;
    height: 15px;
}
.step {
    flex: none;
    background: #f3f6fa;
}
.track {
    flex: 1;
    background: #fafafa;
}
.thumb {
    width: 14px;
    height: 13px;
    border: 1px solid #8797a8;
    border-radius: 1px;
    background: linear-gradient(135deg, #f2f7fb, #cbdbe9);
}
.vscroll {
    display: flex;
    flex-direction: column;
    align-items: center;
    gap: 3px;
    width: 17px;
    padding: 1px 0 2px;
}
.corner {
    flex: none;
    width: 17px;
    height: 19px;
    border: 1px solid #9fa8b3;
    background: #ccd0d8;
}
.hscroll {
    display: flex;
    gap: 3px;
    height: 15px;
    margin: 3px 21px 0 374px;
}
.hscroll .thumb {
    width: 13px;
    height: 15px;
}

/* function buttons under the table */
.actions {
    display: flex;
    gap: 8px;
    padding: 13px 2px 9px;
}
.group {
    display: flex;
    gap: 1px;
}
.group-gap {
    margin-left: 7px;
}
.actions button {
    display: flex;
    align-items: center;
    justify-content: center;
    width: 20px;
    height: 22px;
    border: 1px solid #77736a;
    border-radius: 2px;
    background: linear-gradient(#fff7cf, #ffe78f);
}
.actions svg {
    width: 16px;
    height: 16px;
}
.actions .wide {
    width: 41px;
    gap: 3px;
}

/* status bar */
.statusbar {
    display: grid;
    grid-template-columns: 1fr auto 1fr;
    align-items: center;
    height: 26px;
    padding: 0 18px;
    background: #fdfdfd;
}
.sap-text {
    font: bold 14px "Liberation Sans", Arial, sans-serif;
    fill: #fff;
}
.status-info {
    display: flex;
    align-items: center;
    justify-content: flex-end;
    gap: 6px;
}
.st {
    display: flex;
    align-items: center;
    gap: 6px;
    height: 16px;
    padding-left: 6px;
    border-left: 1px solid #d0d0d0;
}
.st-empty {
    width: 22px;
}
.st-wide {
    padding: 0 5px 0 11px;
}
.st-icon svg {
    width: 16px;
    height: 16px;
}

/* windows taskbar */
.taskbar {
    flex: none;
    display: flex;
    align-items: center;
    height: 30px;
    font-family: "Open Sans", "Segoe UI", sans-serif;
    font-size: 11px;
    color: #fff;
    background: #020407;
}
.task-icons {
    display: flex;
    align-items: center;
    gap: 20px;
    padding: 0 15px 0 10px;
}
.task {
    display: flex;
    align-items: center;
    gap: 4px;
    width: 152px;
    height: 30px;
    padding-left: 4px;
    border-bottom: 2px solid #76b9ed;
    white-space: nowrap;
}
.task svg {
    width: 16px;
    height: 16px;
}
.task + .task {
    margin-left: 9px;
}
.task + .task-active {
    width: 160px;
    margin-left: 4px;
    padding-left: 8px;
    background: #34373b;
}
.mail {
    margin: 0 15px;
}
.tray {
    display: flex;
    align-items: center;
    gap: 10px;
    height: 30px;
    margin-left: auto;
    margin-right: 4px;
    padding-right: 20px;
    border-right: 1px solid #666;
}
.notice {
    margin-left: 8px;
}
```
